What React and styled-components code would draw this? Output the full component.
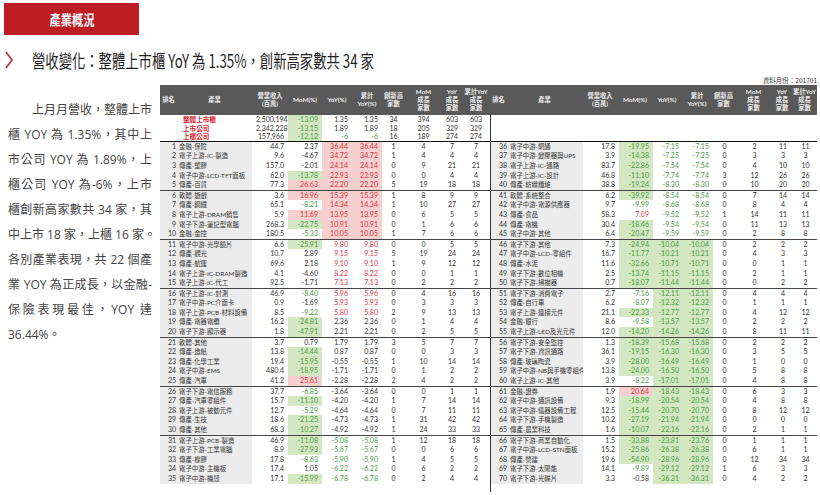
import React from "react";
import styled, { createGlobalStyle } from "styled-components";

const GlobalStyle = createGlobalStyle`
  html, body { margin: 0; padding: 0; background: #fff; }
  body {
    width: 820px;
    height: 495px;
    overflow: hidden;
    font-family: "Noto Sans CJK TC", sans-serif;
  }
`;

// summary rows on top of the left half
const summary = [
  ["整體上市櫃", "2,500,194", "-13.09", "1.35", "1.35", 34, 394, 603, 603],
  ["上市公司", "2,342,228", "-13.15", "1.89", "1.89", 18, 205, 329, 329],
  ["上櫃公司", "157,966", "-12.12", "-6", "-6", 16, 189, 274, 274],
];

// rank, industry, revenue, MoM, YoY, cumulative YoY, new highs, MoM up, YoY up, cum YoY up
const rows = [
  [1, "金融-保險", "44.7", "2.37", "36.44", "36.44", 1, 4, 7, 7],
  [2, "電子上游-IC-製造", "9.6", "-4.67", "34.72", "34.72", 1, 4, 4, 4],
  [3, "傳產-塑膠", "157.0", "-2.01", "24.14", "24.14", 0, 9, 21, 21],
  [4, "電子中游-LCD-TFT面板", "62.0", "-13.78", "22.93", "22.93", 0, 0, 4, 4],
  [5, "傳產-百貨", "77.3", "26.63", "22.20", "22.20", 5, 19, 18, 18],
  [6, "軟體-遊戲", "3.6", "16.96", "15.39", "15.39", 1, 8, 9, 9],
  [7, "傳產-鋼鐵", "65.1", "-8.21", "14.34", "14.34", 1, 10, 27, 27],
  [8, "電子上游-DRAM銷售", "5.9", "11.69", "13.95", "13.95", 0, 6, 5, 5],
  [9, "電子下游-筆記型電腦", "268.3", "-22.75", "10.91", "10.91", 0, 1, 6, 6],
  [10, "金融-金控", "180.5", "-5.33", "10.05", "10.05", 1, 7, 6, 6],
  [11, "電子中游-光學鏡片", "6.6", "-25.91", "9.80", "9.80", 0, 0, 5, 5],
  [12, "傳產-觀光", "10.7", "2.89", "9.15", "9.15", 5, 19, 24, 24],
  [13, "傳產-航運", "69.6", "2.18", "9.10", "9.10", 1, 9, 12, 12],
  [14, "電子上游-IC-DRAM製造", "4.1", "-4.60", "8.22", "8.22", 0, 0, 1, 1],
  [15, "電子上游-IC-代工", "92.5", "-1.71", "7.13", "7.13", 0, 2, 2, 2],
  [16, "電子上游-IC-封測", "46.9", "-8.40", "5.96", "5.96", 0, 4, 16, 16],
  [17, "電子中游-PC介面卡", "0.9", "-1.69", "5.93", "5.93", 0, 3, 3, 3],
  [18, "電子上游-PCB-材料設備", "8.5", "-9.22", "5.80", "5.80", 2, 9, 13, 13],
  [19, "傳產-電器電纜", "16.2", "-24.81", "2.36", "2.36", 0, 1, 4, 4],
  [20, "電子下游-顯示器", "1.8", "-47.91", "2.21", "2.21", 0, 2, 5, 5],
  [21, "軟體-其他", "3.7", "0.79", "1.79", "1.79", 3, 5, 7, 7],
  [22, "傳產-造紙", "13.8", "-14.44", "0.87", "0.87", 0, 0, 3, 3],
  [23, "傳產-化學工業", "19.4", "-15.95", "-0.55", "-0.55", 1, 10, 14, 14],
  [24, "電子中游-EMS", "480.4", "-18.95", "-1.71", "-1.71", 0, 1, 2, 2],
  [25, "傳產-汽車", "41.2", "25.61", "-2.28", "-2.28", 2, 4, 2, 2],
  [26, "電子下游-電信服務", "37.7", "-6.85", "-3.64", "-3.64", 0, 0, 1, 1],
  [27, "傳產-汽車零組件", "15.7", "-11.10", "-4.20", "-4.20", 1, 7, 14, 14],
  [28, "電子上游-被動元件", "12.7", "-5.29", "-4.64", "-4.64", 0, 7, 11, 11],
  [29, "傳產-生技", "18.6", "-21.25", "-4.73", "-4.73", 1, 31, 42, 42],
  [30, "傳產-其他", "68.3", "-10.27", "-4.92", "-4.92", 1, 24, 33, 33],
  [31, "電子上游-PCB-製造", "46.9", "-11.08", "-5.08", "-5.08", 1, 12, 18, 18],
  [32, "電子下游-工業電腦", "8.9", "-27.93", "-5.67", "-5.67", 0, 0, 6, 6],
  [33, "傳產-橡膠", "17.8", "-8.63", "-5.90", "-5.90", 1, 4, 5, 5],
  [34, "電子中游-主機板", "17.4", "1.05", "-6.22", "-6.22", 0, 6, 2, 2],
  [35, "電子中游-機殼", "17.1", "-15.99", "-6.78", "-6.78", 0, 2, 4, 4],
  [36, "電子中游-網通", "17.8", "-19.95", "-7.15", "-7.15", 0, 2, 11, 11],
  [37, "電子中游-變壓器與UPS", "3.9", "-14.38", "-7.25", "-7.25", 0, 3, 3, 3],
  [38, "電子上游-IC-通路", "83.7", "-22.86", "-7.54", "-7.54", 0, 4, 10, 10],
  [39, "電子上游-IC-設計", "46.8", "-11.10", "-7.74", "-7.74", 3, 12, 26, 26],
  [40, "傳產-紡織纖維", "38.8", "-19.24", "-8.30", "-8.30", 0, 10, 20, 20],
  [41, "軟體-系統整合", "6.2", "-39.92", "-8.54", "-8.54", 0, 7, 14, 14],
  [42, "電子中游-電源供應器", "9.7", "-9.99", "-8.68", "-8.68", 0, 8, 4, 4],
  [43, "傳產-食品", "58.3", "7.09", "-9.52", "-9.52", 1, 14, 11, 11],
  [44, "傳產-電機", "30.4", "-18.46", "-9.54", "-9.54", 0, 11, 13, 13],
  [45, "電子中游-其他", "6.4", "-20.47", "-9.59", "-9.59", 0, 2, 8, 8],
  [46, "電子下游-其他", "7.3", "-24.94", "-10.04", "-10.04", 0, 2, 2, 2],
  [47, "電子中游-LCD-零組件", "16.7", "-11.77", "-10.21", "-10.21", 0, 4, 3, 3],
  [48, "傳產-水泥", "11.6", "-32.66", "-10.71", "-10.71", 0, 0, 1, 1],
  [49, "電子下游-數位相機", "2.5", "-13.74", "-11.15", "-11.15", 0, 2, 1, 1],
  [50, "電子下游-掃描器", "0.7", "-18.07", "-11.44", "-11.44", 0, 0, 2, 2],
  [51, "電子下游-消費電子", "2.7", "-7.16", "-12.11", "-12.11", 0, 4, 4, 4],
  [52, "傳產-自行車", "6.2", "-8.07", "-12.32", "-12.32", 0, 1, 1, 1],
  [53, "電子上游-連接元件", "21.1", "-22.33", "-12.77", "-12.77", 0, 4, 12, 12],
  [54, "金融-銀行", "8.6", "-9.58", "-13.57", "-13.57", 0, 2, 2, 2],
  [55, "電子上游-LED及光元件", "12.0", "-14.20", "-14.26", "-14.26", 0, 8, 11, 11],
  [56, "電子下游-安全監控", "1.3", "-18.39", "-15.68", "-15.68", 0, 2, 2, 2],
  [57, "電子下游-資訊通路", "36.1", "-19.15", "-16.30", "-16.30", 0, 3, 5, 5],
  [58, "傳產-玻璃陶瓷", "3.9", "-28.00", "-16.49", "-16.49", 0, 1, 0, 0],
  [59, "電子中游-NB與手機零組件", "13.8", "-24.00", "-16.50", "-16.50", 0, 5, 8, 8],
  [60, "電子上游-IC-其他", "3.9", "-8.22", "-17.01", "-17.01", 0, 4, 8, 8],
  [61, "金融-證券", "1.9", "20.64", "-18.43", "-18.43", 0, 6, 3, 3],
  [62, "電子中游-通訊設備", "9.3", "-18.99", "-20.54", "-20.54", 0, 4, 8, 8],
  [63, "電子中游-儀器設備工程", "12.5", "-15.44", "-20.70", "-20.70", 0, 8, 12, 12],
  [64, "電子下游-手機製造", "10.2", "-27.19", "-21.94", "-21.94", 0, 0, 0, 0],
  [65, "傳產-農業科技", "1.6", "-10.07", "-22.16", "-22.16", 0, 2, 1, 1],
  [66, "電子下游-商業自動化", "1.5", "-33.88", "-23.81", "-23.76", 0, 1, 1, 1],
  [67, "電子中游-LCD-STN面板", "15.2", "-25.86", "-26.38", "-26.38", 0, 6, 1, 1],
  [68, "傳產-營建", "19.6", "-54.90", "-28.96", "-28.96", 0, 12, 34, 34],
  [69, "電子下游-太陽能", "14.1", "-9.89", "-29.12", "-29.12", 1, 6, 3, 3],
  [70, "電子下游-光碟片", "3.3", "-0.58", "-36.31", "-36.31", 0, 4, 2, 2],
];

const headers = [
  "排名", "產業", "營業收入\n(百萬)", "MoM(%)", "YoY(%)", "累計\nYoY(%)",
  "創新高\n家數", "MoM\n成長\n家數", "YoY\n成長\n家數", "累計YoY\n成長\n家數",
];

const LEFT_COLS = "17px 75px 36px 34px 30px 30px 23px 37px 20px 28px";
const RIGHT_COLS = "17px 75px 36px 34px 30px 30px 23px 37px 20px 25px";

// conditional colours as in the sheet: +/-5 text, +/-10 fill
const tone = (v) => {
  const n = parseFloat(v);
  if (n >= 10) return "hi";
  if (n >= 5) return "up";
  if (n <= -10) return "lo";
  if (n <= -5) return "down";
  return "";
};

const toneBg = { hi: "#f6cfcf", lo: "#d3e7c3" };
const toneColor = { hi: "#d9363e", up: "#d9363e", lo: "#4a9c45", down: "#4a9c45" };

const Page = styled.div`
  display: flex;
  flex-direction: column;
  color: #222;
`;

const Banner = styled.div`
  margin: 3px 0 0 4px;
  width: 135px;
  height: 32px;
  background: #bd1e24;
  display: flex;
  align-items: center;
  justify-content: center;
  color: #fff;
  font-size: 14px;
  font-weight: 700;
  span { display: inline-block; transform: scaleX(0.8); }
`;

const TitleRow = styled.div`
  display: flex;
  align-items: center;
  height: 26px;
  margin-top: 12px;
`;

const Chevron = styled.svg`
  width: 10px;
  height: 18px;
  margin-left: 4px;
`;

const Title = styled.h1`
  margin: 0 0 0 18px;
  font-size: 18px;
  line-height: 26px;
  font-weight: 400;
  color: #1f1f1f;
  white-space: nowrap;
  transform: scaleX(0.74);
  transform-origin: left center;
`;

const Body = styled.div`
  display: flex;
  align-items: flex-start;
`;

const Note = styled.div`
  width: 144px;
  margin: 24px 0 0 8px;
  font-family: "Open Sans", "Noto Sans CJK TC", sans-serif;
  font-size: 12px;
  line-height: 25px;
  color: #444;
`;

const NoteLine = styled.div`
  text-align: justify;
  text-align-last: ${(p) => (p.$last ? "left" : "justify")};
  text-indent: ${(p) => (p.$indent ? "24px" : "0")};
  white-space: nowrap;
`;

const TableArea = styled.div`
  margin-left: 8px;
  display: flex;
  flex-direction: column;
`;

const Caption = styled.div`
  align-self: flex-end;
  height: 9px;
  margin-top: 3px;
  font-size: 6.5px;
  line-height: 9px;
  color: #333;
`;

const HeaderBar = styled.div`
  display: flex;
  height: 30px;
  background: #595959;
  color: #ececec;
`;

const Half = styled.div`
  display: grid;
  grid-template-columns: ${(p) => (p.$right ? RIGHT_COLS : LEFT_COLS)};
  border-left: ${(p) => (p.$right && !p.$plain ? "1px solid #333" : "0")};
  width: ${(p) => (p.$right ? "327px" : "330px")};
  box-sizing: border-box;
`;

const HeadCell = styled.div`
  display: flex;
  align-items: center;
  justify-content: center;
  text-align: center;
  white-space: pre-line;
  font-size: 6.3px;
  line-height: 7.8px;
  font-weight: 700;
  font-family: Lato, "Noto Sans CJK TC", sans-serif;
`;

const Group = styled.div`
  border-top: 1px solid ${(p) => (p.$dark ? "#111" : "#444")};
`;

const Row = styled.div`
  display: flex;
  height: ${(p) => p.$h}px;
  line-height: ${(p) => p.$h}px;
  font-size: 7px;
  font-family: Lato, "Noto Sans CJK TC", sans-serif;
  color: #333;
`;

const Cell = styled.div`
  text-align: ${(p) => p.$align || "right"};
  padding: 0 ${(p) => p.$pad ?? 4}px;
  background: ${(p) => (p.$gray ? "#ececec" : toneBg[p.$tone] || "transparent")};
  color: ${(p) => toneColor[p.$tone] || "inherit"};
  white-space: nowrap;
  overflow: hidden;
`;

const NameCell = styled(Cell)`
  font-size: 6.4px;
  padding: 0 0 0 2px;
`;

const SummaryName = styled.div`
  grid-column: 1 / span 2;
  padding-left: 23px;
  color: #e0202a;
  font-weight: 700;
  font-size: 6.6px;
`;

const DataHalf = ({ r, right }) => (
  <Half $right={right}>
    <Cell $gray $pad={1}>{r[0]}</Cell>
    <NameCell $gray $align="left">{r[1]}</NameCell>
    <Cell>{r[2]}</Cell>
    <Cell $tone={tone(r[3])}>{r[3]}</Cell>
    <Cell $tone={tone(r[4])}>{r[4]}</Cell>
    <Cell $tone={tone(r[5])}>{r[5]}</Cell>
    <Cell $align="center" $pad={0}>{r[6]}</Cell>
    <Cell $align="center" $pad={0}>{r[7]}</Cell>
    <Cell $align="center" $pad={0}>{r[8]}</Cell>
    <Cell $align="center" $pad={0}>{r[9]}</Cell>
  </Half>
);

const noteLines = [
  "上月月營收，整體上市",
  "櫃 YOY 為 1.35%，其中上",
  "市公司 YOY 為 1.89%，上",
  "櫃公司 YOY 為-6%，上市",
  "櫃創新高家數共 34 家，其",
  "中上市 18 家，上櫃 16 家。",
  "各別產業表現，共 22 個產",
  "業 YOY 為正成長，以金融-",
  "保險表現最佳，YOY 達",
  "36.44%。",
];

export default function App() {
  const left = rows.slice(0, 35);
  const right = rows.slice(35);
  const groups = [0, 1, 2, 3, 4, 5, 6];

  return (
    <Page>
      <GlobalStyle />
      <Banner><span>產業概況</span></Banner>
      <TitleRow>
        <Chevron viewBox="0 0 10 18">
          <polyline points="2,1 8,9 2,17" fill="none" stroke="#c0262c" strokeWidth="1.6" />
        </Chevron>
        <Title>營收變化：整體上市櫃 YoY 為 1.35%，創新高家數共 34 家</Title>
      </TitleRow>
      <Body>
        <Note>
          {noteLines.map((l, i) => (
            <NoteLine key={i} $indent={i === 0} $last={i === noteLines.length - 1}>
              {l}
            </NoteLine>
          ))}
        </Note>
        <TableArea>
          <Caption>資料月份：201701</Caption>
          <HeaderBar>
            <Half $plain>
              {headers.map((h) => <HeadCell key={h}>{h}</HeadCell>)}
            </Half>
            <Half $right $plain>
              {headers.map((h) => <HeadCell key={h}>{h}</HeadCell>)}
            </Half>
          </HeaderBar>
          {summary.map((s) => (
            <Row key={s[0]} $h={8.6}>
              <Half>
                <SummaryName>{s[0]}</SummaryName>
                <Cell>{s[1]}</Cell>
                <Cell $tone={tone(s[2])}>{s[2]}</Cell>
                <Cell $tone={tone(s[3])}>{s[3]}</Cell>
                <Cell $tone={tone(s[4])}>{s[4]}</Cell>
                <Cell $align="center" $pad={0}>{s[5]}</Cell>
                <Cell $align="center" $pad={0}>{s[6]}</Cell>
                <Cell $align="center" $pad={0}>{s[7]}</Cell>
                <Cell $align="center" $pad={0}>{s[8]}</Cell>
              </Half>
              <Half $right />
            </Row>
          ))}
          {groups.map((g) => (
            <Group key={g} $dark={g === 0}>
              {[0, 1, 2, 3, 4].map((k) => {
                const i = g * 5 + k;
                return (
                  <Row key={i} $h={9.6}>
                    <DataHalf r={left[i]} />
                    <DataHalf r={right[i]} right />
                  </Row>
                );
              })}
            </Group>
          ))}
          <Row $h={8}>
            <Half />
            <Half $right />
          </Row>
        </TableArea>
      </Body>
    </Page>
  );
}
